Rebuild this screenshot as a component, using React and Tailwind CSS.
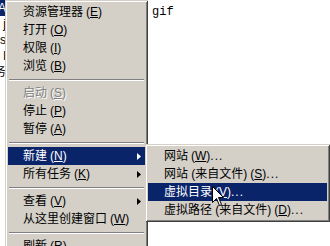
import React from "react";

const main = [
  { label: "资源管理器", k: "E" },
  { label: "打开", k: "O" },
  { label: "权限", k: "I" },
  { label: "浏览", k: "B" },
  "sep",
  { label: "启动", k: "S", disabled: true },
  { label: "停止", k: "P" },
  { label: "暂停", k: "A" },
  "sep",
  { label: "新建", k: "N", arrow: true, hot: true },
  { label: "所有任务", k: "K", arrow: true },
  "sep",
  { label: "查看", k: "V", arrow: true },
  { label: "从这里创建窗口", k: "W" },
  "sep",
  { label: "刷新", k: "R" },
];

const sub = [
  { label: "网站", k: "W", dots: true },
  { label: "网站 (来自文件)", k: "S", dots: true },
  { label: "虚拟目录", k: "V", dots: true, hot: true },
  { label: "虚拟路径 (来自文件)", k: "D", dots: true },
];

function Arrow() {
  return (
    <svg width="4" height="7" viewBox="0 0 4 7" className="fill-current">
      <polygon points="0,0 4,3.5 0,7" />
    </svg>
  );
}

function Item({ item, pad }) {
  if (item === "sep") {
    return (
      <div className="flex h-[9px] flex-col justify-center px-px">
        <div className="h-px bg-[#808080]" />
        <div className="h-px bg-white" />
      </div>
    );
  }

  const tone = item.hot
    ? "bg-[#0a246a] text-white"
    : item.disabled
      ? "text-[#808080] [text-shadow:1px_1px_0_#fff]"
      : "text-black";

  return (
    <div className={`flex h-[18px] items-center pr-[4px] ${pad} ${tone}`}>
      <span className="flex-1 whitespace-nowrap leading-[18px]">
        {item.label}
        <span className="ml-[3px]">
          (<span className="underline underline-offset-1">{item.k}</span>)
        </span>
        {item.dots ? <span className="tracking-[1px]">...</span> : null}
      </span>
      {item.arrow && <Arrow />}
    </div>
  );
}

function Menu({ items, className, pad }) {
  return (
    <div
      className={`absolute flex flex-col bg-[#d4d0c8] p-[3px] shadow-[inset_1px_1px_0_#d4d0c8,inset_-1px_-1px_0_#404040,inset_2px_2px_0_#fff,inset_-2px_-2px_0_#808080] ${className}`}
    >
      {items.map((item, i) => (
        <Item key={i} item={item} pad={pad} />
      ))}
    </div>
  );
}

function Cursor() {
  return (
    <svg
      width="12"
      height="21"
      viewBox="0 0 12 21"
      className="absolute left-[212px] top-[186px]"
    >
      <path
        d="M0.5 0.5 L0.5 16.5 L4.5 12.5 L7.5 19.5 L9.5 18.5 L6.5 11.5 L11.5 11.5 Z"
        fill="#fff"
        stroke="#000"
        strokeWidth="1"
      />
    </svg>
  );
}

export default function App() {
  return (
    <div className="relative h-[246px] w-[330px] overflow-hidden bg-white font-['Liberation_Sans','Noto_Sans_CJK_SC',sans-serif] text-[12px]">
      <div className="absolute left-0 top-0 flex h-full w-[6px] flex-col items-end overflow-hidden text-[12px] leading-[16px] text-black">
        <span className="bg-[#0a246a] text-white">A</span>
        <span>j</span>
        <span>s</span>
        <span>l</span>
        <span>务</span>
      </div>

      <span className="absolute left-[152px] top-[5px] font-['Liberation_Mono',monospace] text-[12px] leading-[14px] text-black">
        gif
      </span>

      <Menu items={main} className="left-[5px] top-0 w-[143px]" pad="pl-[15px]" />
      <Menu items={sub} className="left-[145px] top-[144px] w-[185px]" pad="pl-[16px]" />
      <Cursor />
    </div>
  );
}
